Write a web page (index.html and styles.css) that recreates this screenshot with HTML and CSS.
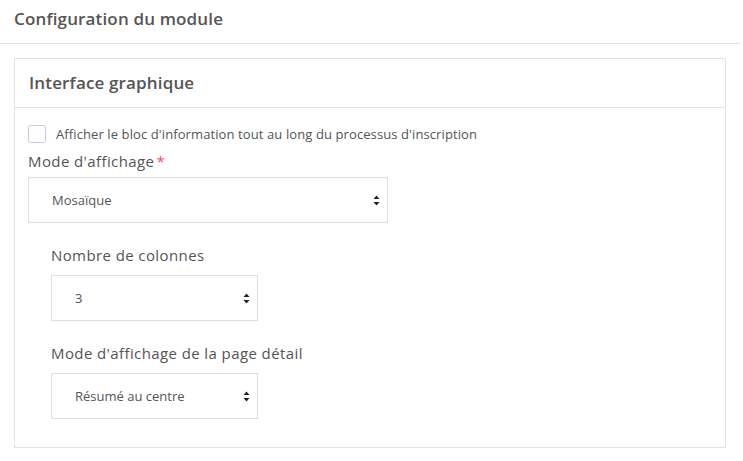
FILE: index.html
```html
<!DOCTYPE html>
<html lang="fr">
<head>
<meta charset="utf-8">
<title>Configuration du module</title>
<link rel="stylesheet" href="styles.css">
</head>
<body>
<div class="page">
  <header class="page-header">
    <h1 class="page-title">Configuration du module</h1>
  </header>
  <section class="panel">
    <div class="panel-heading">
      <h2 class="panel-title">Interface graphique</h2>
    </div>
    <div class="panel-body">
      <label class="check-row">
        <span class="checkbox"></span>
        <span class="check-label">Afficher le bloc d'information tout au long du processus d'inscription</span>
      </label>
      <div class="field">
        <div class="field-label">Mode d'affichage<span class="required">*</span></div>
        <div class="select select-wide">
          <span class="select-value">Mosaïque</span>
          <svg class="select-arrows" width="7" height="11" viewBox="0 0 7 11"><path d="M3.5 0.5 L6.5 4 H0.5 Z M3.5 10.5 L6.5 7 H0.5 Z" fill="#222"/></svg>
        </div>
      </div>
      <div class="subfields">
        <div class="field sub">
          <div class="field-label">Nombre de colonnes</div>
          <div class="select select-narrow">
            <span class="select-value">3</span>
            <svg class="select-arrows" width="7" height="11" viewBox="0 0 7 11"><path d="M3.5 0.5 L6.5 4 H0.5 Z M3.5 10.5 L6.5 7 H0.5 Z" fill="#222"/></svg>
          </div>
        </div>
        <div class="field sub">
          <div class="field-label">Mode d'affichage de la page détail</div>
          <div class="select select-narrow">
            <span class="select-value">Résumé au centre</span>
            <svg class="select-arrows" width="7" height="11" viewBox="0 0 7 11"><path d="M3.5 0.5 L6.5 4 H0.5 Z M3.5 10.5 L6.5 7 H0.5 Z" fill="#222"/></svg>
          </div>
        </div>
      </div>
    </div>
  </section>
</div>
</body>
</html>
```
FILE: styles.css
```css
* { box-sizing: border-box; }
html, body { margin: 0; padding: 0; background: #fff; }
body {
  font-family: "Open Sans", Lato, "Liberation Sans", sans-serif;
  color: #555;
}
.page {
  width: 740px;
}
.page-header {
  height: 44px;
  border-bottom: 1px solid #e3e3e3;
  padding: 8px 0 0 14px;
}
.page-title {
  margin: 0;
  font-size: 17px;
  font-weight: 650;
  letter-spacing: 0.15px;
  line-height: 22px;
  color: #555;
}
.panel {
  margin: 14px 15px 0 14px;
  width: 712px;
  height: 390px;
  border: 1px solid #e3e3e3;
}
.panel-heading {
  height: 49px;
  border-bottom: 1px solid #e3e3e3;
  padding: 13px 0 0 14px;
}
.panel-title {
  margin: 0;
  font-size: 17px;
  font-weight: 650;
  letter-spacing: 0.15px;
  line-height: 22px;
  color: #555;
}
.panel-body {
  padding: 17px 0 0 13px;
}
.check-row {
  display: flex;
  align-items: center;
  gap: 10px;
  height: 18px;
}
.checkbox {
  width: 18px;
  height: 18px;
  border: 1px solid #c5cfdc;
  border-radius: 2px;
  background: #fff;
}
.check-label {
  font-size: 13px;
  letter-spacing: 0.1px;
  color: #555;
}
.field-label {
  font-size: 15px;
  font-weight: 500;
  letter-spacing: 0.4px;
  line-height: 20px;
  color: #555;
}
.required {
  color: #f05050;
  margin-left: 2px;
}
.field {
  display: flex;
  flex-direction: column;
  gap: 6px;
}
.field.sub {
  gap: 10px;
}
.panel-body > .field {
  margin-top: 8px;
}
.select {
  height: 46px;
  border: 1px solid #d5e0ea;
  display: flex;
  align-items: center;
  justify-content: space-between;
  padding: 0 7px 0 23px;
  font-size: 13px;
  color: #555;
}
.select-wide { width: 360px; }
.select-narrow { width: 207px; }
.subfields {
  padding: 22px 0 0 23px;
  display: flex;
  flex-direction: column;
  gap: 22px;
}
```
